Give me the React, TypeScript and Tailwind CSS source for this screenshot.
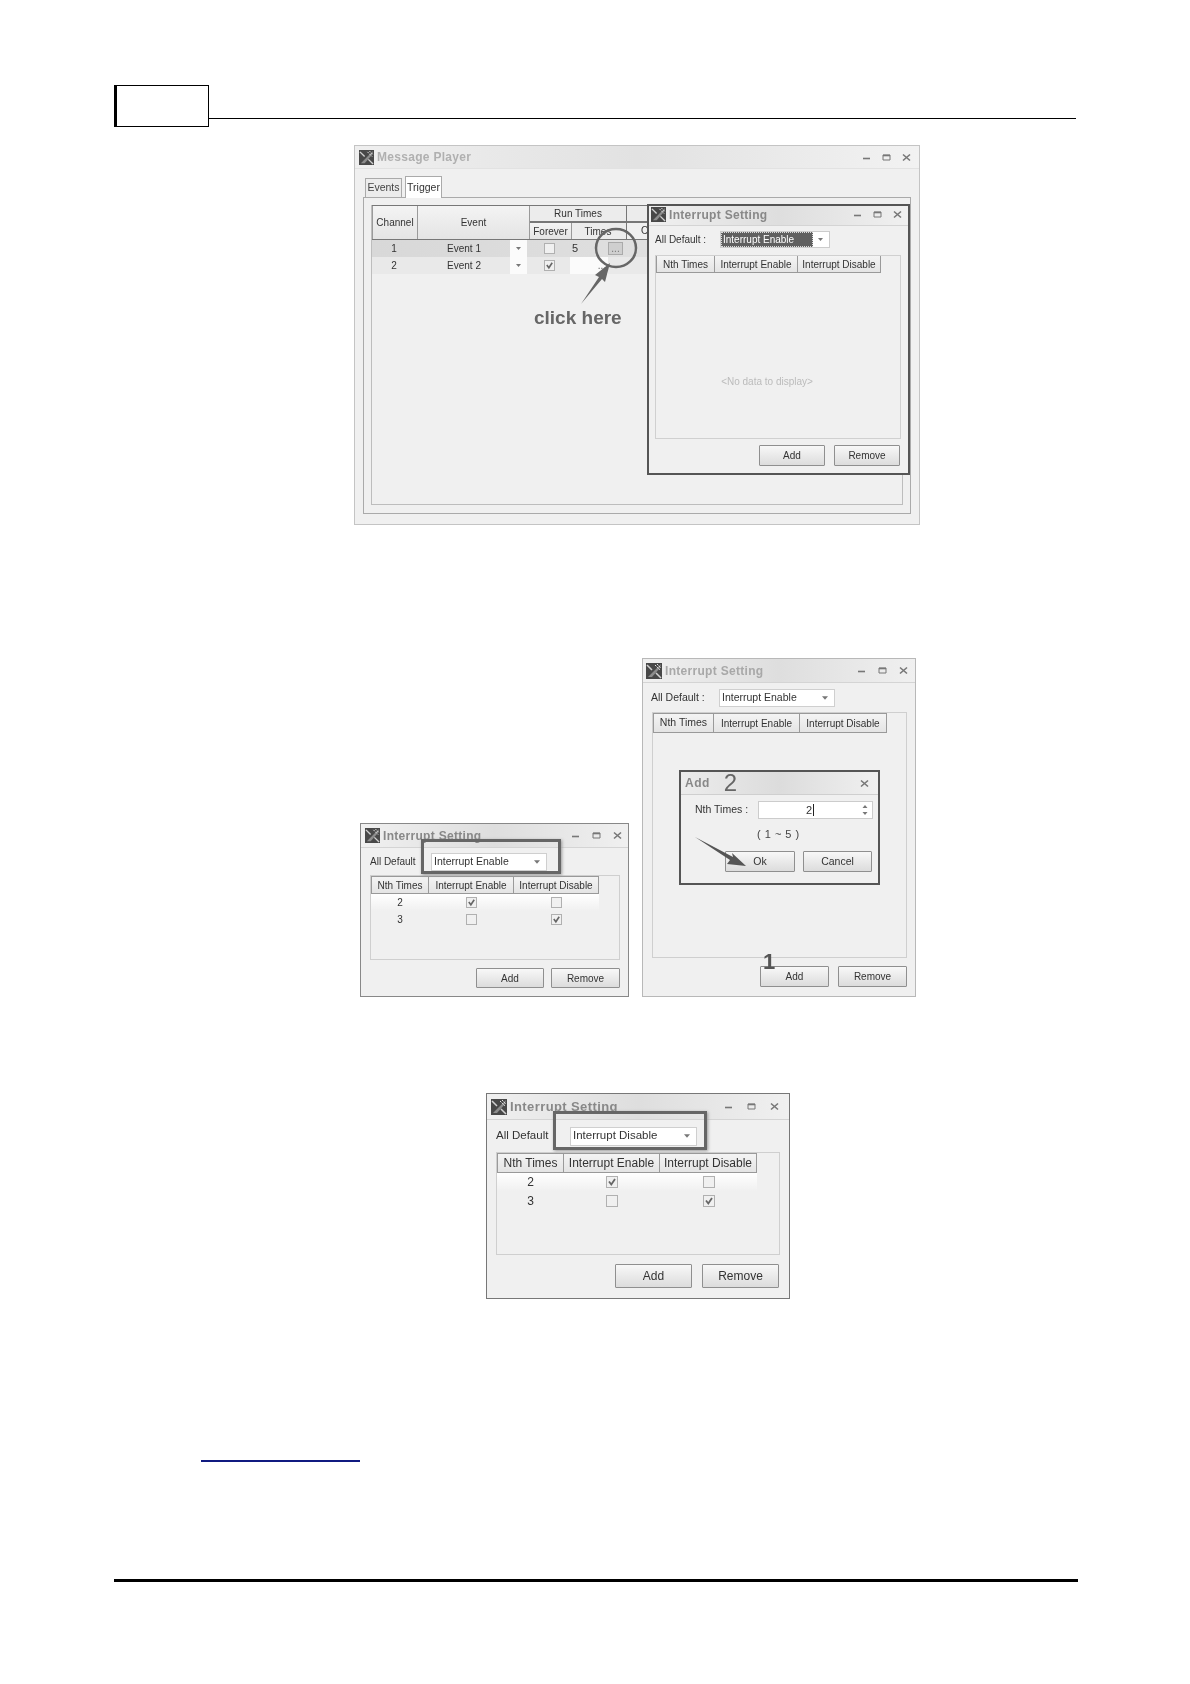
import type { ReactNode } from 'react'

function AppIcon({ className }: { className: string }) {
  return (
    <svg viewBox="0 0 16 16" className={`shrink-0 ${className}`}>
      <rect width="16" height="16" fill="#484848" />
      <path d="M2 14 L13 3 L15 1 L14 5 L6 14 Z" fill="#8c8c8c" />
      <path d="M1 2 L6 7 M10 10 L15 15" stroke="#d0d0d0" strokeWidth="1.5" />
      <path d="M9 2 L14 7 M11 1 L15 5" stroke="#e4e4e4" strokeWidth="1" strokeDasharray="2 1" />
    </svg>
  )
}

// minimize / maximize / close drawn like the scanned window chrome
function WinControls({ showMinMax = true, gap = 'gap-[12px]' }: { showMinMax?: boolean; gap?: string }) {
  return (
    <div className={`flex items-center ${gap}`}>
      {showMinMax && (
        <>
          <svg viewBox="0 0 9 9" className="w-[9px] h-[9px]">
            <path d="M1 5.5 H8" stroke="#777" strokeWidth="1.6" />
          </svg>
          <svg viewBox="0 0 9 9" className="w-[9px] h-[9px]">
            <path d="M1 2 H8 V7 H1 Z" fill="none" stroke="#777" strokeWidth="1" />
            <path d="M1 2.5 H8" stroke="#777" strokeWidth="1.6" />
          </svg>
        </>
      )}
      <svg viewBox="0 0 9 9" className="w-[9px] h-[9px]">
        <path d="M1 1.5 L8 7.5 M8 1.5 L1 7.5" stroke="#777" strokeWidth="1.6" />
      </svg>
    </div>
  )
}

function TitleBar({ title, height, titleClass, iconClass, pad = 'pl-[4px] pr-[6px]', gap }: { title: string; height: string; titleClass: string; iconClass: string; pad?: string; gap?: string }) {
  return (
    <div className={`flex items-center justify-between border-b border-[#d4d4d4] bg-gradient-to-r from-[#f0f0f0] via-[#dedede] to-[#f0f0f0] ${height} ${pad}`}>
      <div className="flex items-center gap-[3px]">
        <AppIcon className={iconClass} />
        <span className={`font-bold font-['Liberation_Sans'] ${titleClass}`}>{title}</span>
      </div>
      <WinControls gap={gap} />
    </div>
  )
}

function Check({ checked, size = 'w-[11px] h-[11px]' }: { checked: boolean; size?: string }) {
  return (
    <span className={`inline-flex items-center justify-center border border-[#b0b0b0] bg-[#f0f0f0] ${size}`}>
      {checked && (
        <svg viewBox="0 0 10 10" className="w-full h-full">
          <path d="M2 4.5 L4.3 7.5 L8 2" fill="none" stroke="#666" strokeWidth="1.8" />
        </svg>
      )}
    </span>
  )
}

function Btn({ label, className }: { label: string; className: string }) {
  return (
    <div className={`flex items-center justify-center border border-[#8f8f8f] rounded-[1px] bg-gradient-to-b from-[#f8f8f8] to-[#dcdcdc] text-[#333] ${className}`}>
      {label}
    </div>
  )
}

function SelectBox({ value, className }: { value: string; className: string }) {
  return (
    <div className={`flex items-center justify-between bg-white border border-[#cfcfcf] pl-[2px] pr-[6px] text-[#333] ${className}`}>
      <span>{value}</span>
      <svg viewBox="0 0 7 4" className="w-[6px] h-[4px]">
        <path d="M0 0 H7 L3.5 4 Z" fill="#777" />
      </svg>
    </div>
  )
}

function HeadCell({ children, className }: { children: ReactNode; className: string }) {
  return (
    <div className={`flex items-center justify-center border-r border-[#9a9a9a] bg-gradient-to-b from-[#f4f4f4] to-[#e4e4e4] text-[#333] ${className}`}>
      {children}
    </div>
  )
}

function Row({ n, first, second, rowClass, cols, checkSize }: { n: string; first: boolean; second: boolean; rowClass: string; cols: string[]; checkSize?: string }) {
  return (
    <div className={`flex items-center text-[#333] ${rowClass}`}>
      <div className={`text-center ${cols[0]}`}>{n}</div>
      <div className={`flex justify-center ${cols[1]}`}><Check checked={first} size={checkSize} /></div>
      <div className={`flex justify-center ${cols[2]}`}><Check checked={second} size={checkSize} /></div>
    </div>
  )
}

function Highlight({ className }: { className: string }) {
  return <div className={`absolute border-[3px] border-[#666] shadow-[1px_1px_3px_#999] ${className}`} />
}

function MessagePlayer() {
  return (
    <div className="relative w-[566px] h-[380px] bg-[#f0f0f0] border border-[#c4c4c4] flex flex-col font-['Liberation_Sans'] text-[10px] blur-[0.35px]">
      <div className="flex items-center justify-between h-[23px] pl-[4px] pr-[8px] border-b border-[#e2e2e2] bg-gradient-to-r from-[#efefef] via-[#e2e2e2] to-[#f2f2f2]">
        <div className="flex items-center gap-[3px]">
          <AppIcon className="w-[15px] h-[15px]" />
          <span className="font-bold text-[12px] tracking-[0.3px] text-[#b0b0b0]">Message Player</span>
        </div>
        <WinControls gap="gap-[11px]" />
      </div>

      {/* tabs */}
      <div className="flex items-end h-[28px] pl-[10px]">
        <div className="flex items-center justify-center w-[37px] h-[19px] border border-[#aaa] border-b-0 bg-[#ececec] text-[#444] text-[10.5px]">Events</div>
        <div className="flex items-center justify-center w-[37px] h-[22px] ml-[3px] -mb-px z-10 border border-[#aaa] border-b-0 bg-white text-[#333] text-[10.5px]">Trigger</div>
      </div>

      <div className="mx-[8px] h-[317px] border border-[#aaa] bg-[#f0f0f0] px-[7px] pt-[7px]">
        <div className="h-[300px] border border-[#bdbdbd] border-t-0">
          {/* header */}
          <div className="flex h-[35px] border-y border-[#777]">
            <HeadCell className="w-[46px] border-l text-[10px]">Channel</HeadCell>
            <HeadCell className="w-[112px] text-[10px]">Event</HeadCell>
            <div className="flex flex-col w-[97px] border-r border-[#777]">
              <div className="flex items-center justify-center h-[17px] border-b-2 border-[#777] text-[#333] bg-[#ececec]">Run Times</div>
              <div className="flex flex-1">
                <HeadCell className="w-[42px] text-[10px]">Forever</HeadCell>
                <div className="flex-1 flex items-center justify-center pr-[2px] text-[10px] text-[#333] bg-[#ececec]">Times</div>
              </div>
            </div>
            <div className="flex-1 flex flex-col">
              <div className="h-[17px] border-b-2 border-[#777] bg-[#ececec]" />
              <div className="flex-1 pl-[14px] text-[10px] text-[#333]">O</div>
            </div>
          </div>
          {/* rows */}
          <div className="flex items-center h-[17px] bg-gradient-to-r from-[#d8d8d8] to-[#e6e6e6] text-[#333]">
            <div className="w-[44px] text-center">1</div>
            <div className="w-[94px] text-center pl-[2px]">Event 1</div>
            <div className="flex items-center justify-center w-[17px] h-full bg-[#fbfbfb]"><svg viewBox="0 0 7 4" className="w-[5px] h-[3px]"><path d="M0 0 H7 L3.5 4 Z" fill="#777" /></svg></div>
            <div className="w-[43px] flex justify-center pl-[2px]"><Check checked={false} /></div>
            <div className="w-[38px] pl-[2px] text-[11px]">5</div>
            <div className="flex items-center justify-center w-[15px] h-[13px] border border-[#aaa] bg-[#cfcfcf] text-[#777] leading-none">...</div>
          </div>
          <div className="flex items-center h-[17px] bg-[#e9e9e9] text-[#333]">
            <div className="w-[44px] text-center">2</div>
            <div className="w-[94px] text-center pl-[2px]">Event 2</div>
            <div className="flex items-center justify-center w-[17px] h-full bg-[#fbfbfb]"><svg viewBox="0 0 7 4" className="w-[5px] h-[3px]"><path d="M0 0 H7 L3.5 4 Z" fill="#777" /></svg></div>
            <div className="w-[43px] flex justify-center pl-[2px]"><Check checked /></div>
            <div className="flex items-center justify-end w-[38px] h-full bg-[#fbfbfb] pr-[2px] text-[#666] leading-none">...</div>
          </div>
        </div>
      </div>

      {/* click annotation */}
      <svg viewBox="0 0 566 380" className="absolute left-0 top-0 w-[566px] h-[380px] pointer-events-none">
        <ellipse cx="261" cy="102" rx="20" ry="19" fill="none" stroke="#666" strokeWidth="2.5" />
        <path d="M226 158 L244 131 L240 129 L255 117 L250 136 L247 133 Z" fill="#666" />
      </svg>
      <span className="absolute left-[179px] top-[160px] font-bold text-[19px] leading-[24px] text-[#666]">click here</span>

      {/* dialog over the player */}
      <div className="absolute left-[292px] top-[58px] w-[263px] h-[271px] flex flex-col border-2 border-[#555] bg-[#f0f0f0]">
        <TitleBar title="Interrupt Setting" height="h-[20px] pb-[2px]" titleClass="text-[12px] tracking-[0.3px] text-[#888]" iconClass="w-[15px] h-[15px]" pad="pl-[2px] pr-[6px]" gap="gap-[11px]" />
        <div className="flex items-center h-[27px] pl-[6px]">
          <span className="w-[65px] text-[10px] text-[#333]">All Default :</span>
          <div className="flex items-center justify-between w-[110px] h-[17px] bg-white border border-[#ccc] pr-[6px]">
            <span className="flex items-center w-[92px] h-full bg-[#606060] text-white border border-dotted border-[#ddd] pl-[1px]">Interrupt Enable</span>
            <svg viewBox="0 0 7 4" className="w-[5px] h-[3px]"><path d="M0 0 H7 L3.5 4 Z" fill="#777" /></svg>
          </div>
        </div>
        <div className="relative ml-[6px] mr-[7px] mt-[2px] h-[184px] border border-[#d0d0d0]">
          <div className="flex w-[225px] h-[17px] border-b border-[#999]">
            <HeadCell className="w-[59px] border-l">Nth Times</HeadCell>
            <HeadCell className="w-[83px]">Interrupt Enable</HeadCell>
            <HeadCell className="w-[83px]">Interrupt Disable</HeadCell>
          </div>
          <div className="flex items-center justify-center h-[160px] pr-[22px] pt-[56px] text-[#bbb]">&lt;No data to display&gt;</div>
        </div>
        <div className="flex justify-end gap-[9px] mt-[6px] pr-[8px]">
          <Btn label="Add" className="w-[66px] h-[21px]" />
          <Btn label="Remove" className="w-[66px] h-[21px]" />
        </div>
      </div>
    </div>
  )
}

function EnableWindow() {
  const cols = ['w-[58px]', 'w-[85px]', 'w-[85px]']
  return (
    <div className="relative w-[269px] h-[174px] flex flex-col bg-[#f0f0f0] border border-[#888] font-['Liberation_Sans'] text-[10px] blur-[0.35px]">
      <TitleBar title="Interrupt Setting" height="h-[24px]" titleClass="text-[12px] tracking-[0.3px] text-[#888]" iconClass="w-[15px] h-[15px]" />
      <div className="flex items-center h-[27px] pl-[9px]">
        <span className="w-[61px] text-[10px] text-[#333]">All Default</span>
        <SelectBox value="Interrupt Enable" className="w-[116px] h-[18px] text-[10.5px]" />
      </div>
      <div className="ml-[9px] mr-[8px] h-[85px] border border-[#cfcfcf]">
        <div className="flex w-[228px] h-[18px] border-y border-[#999]">
          <HeadCell className={`${cols[0]} border-l text-[10px]`}>Nth Times</HeadCell>
          <HeadCell className={`${cols[1]} text-[10px]`}>Interrupt Enable</HeadCell>
          <HeadCell className={`${cols[2]} text-[10px]`}>Interrupt Disable</HeadCell>
        </div>
        <Row n="2" first second={false} rowClass="w-[228px] h-[17px] bg-gradient-to-b from-white to-[#f0f0f0]" cols={cols} />
        <Row n="3" first={false} second rowClass="w-[228px] h-[17px]" cols={cols} />
      </div>
      <div className="flex justify-end gap-[7px] mt-[8px] pr-[8px]">
        <Btn label="Add" className="w-[68px] h-[20px]" />
        <Btn label="Remove" className="w-[69px] h-[20px]" />
      </div>
      <Highlight className="left-[60px] top-[15px] w-[140px] h-[35px]" />
    </div>
  )
}

function AddWindow() {
  return (
    <div className="relative w-[274px] h-[339px] flex flex-col bg-[#f0f0f0] border border-[#b8b8b8] font-['Liberation_Sans'] text-[10px] blur-[0.35px]">
      <TitleBar title="Interrupt Setting" height="h-[24px]" titleClass="text-[12px] tracking-[0.3px] text-[#a8a8a8]" iconClass="w-[16px] h-[16px]" pad="pl-[3px] pr-[7px]" />
      <div className="flex items-center h-[29px] pl-[8px]">
        <span className="w-[68px] text-[10.5px] text-[#333]">All Default :</span>
        <SelectBox value="Interrupt Enable" className="w-[116px] h-[18px] text-[10.5px]" />
      </div>
      <div className="relative ml-[9px] mr-[8px] h-[246px] border border-[#cfcfcf]">
        <div className="flex w-[234px] h-[20px] border-y border-[#999]">
          <HeadCell className="w-[61px] border-l text-[10.5px]">Nth Times</HeadCell>
          <HeadCell className="w-[86px] text-[10px]">Interrupt Enable</HeadCell>
          <HeadCell className="w-[87px] text-[10px]">Interrupt Disable</HeadCell>
        </div>

        {/* modal add dialog */}
        <div className="absolute left-[26px] top-[57px] w-[201px] h-[115px] flex flex-col border-2 border-[#555] bg-[#f0f0f0]">
          <div className="relative flex items-center justify-between h-[23px] pl-[4px] pr-[9px] border-b border-[#cfcfcf] bg-gradient-to-r from-[#ececec] via-[#dcdcdc] to-[#f0f0f0]">
            <div className="flex items-center gap-[14px]">
              <span className="font-bold text-[12px] tracking-[0.5px] text-[#888]">Add</span>
              <span className="text-[24px] leading-[24px] text-[#666]">2</span>
            </div>
            <WinControls showMinMax={false} />
          </div>
          <div className="flex items-center h-[24px] mt-[3px] pl-[14px]">
            <span className="w-[63px] text-[10.5px] text-[#333]">Nth Times :</span>
            <div className="flex items-center justify-between w-[115px] h-[18px] bg-white border border-[#ccc] pl-[47px] pr-[4px] text-[#333] text-[11px]">
              <span className="border-r border-[#222] pr-[1px] leading-[12px]">2</span>
              <svg viewBox="0 0 6 12" className="w-[6px] h-[12px]">
                <path d="M0.5 4 L3 1 L5.5 4 Z M0.5 8 L3 11 L5.5 8 Z" fill="#777" />
              </svg>
            </div>
          </div>
          <div className="h-[18px] mt-[4px] pl-[76px] text-[11px] text-[#444] tracking-[0.5px]">( 1 ~ 5 )</div>
          <div className="flex justify-end gap-[8px] mt-[7px] pr-[6px]">
            <Btn label="Ok" className="w-[70px] h-[21px] text-[10.5px]" />
            <Btn label="Cancel" className="w-[69px] h-[21px] text-[10.5px]" />
          </div>
        </div>
      </div>
      <div className="flex justify-end gap-[9px] mt-[8px] pr-[8px]">
        <Btn label="Add" className="w-[69px] h-[21px]" />
        <Btn label="Remove" className="w-[69px] h-[21px]" />
      </div>

      {/* annotations */}
      <span className="absolute left-[120px] top-[291px] text-[22px] font-bold leading-[24px] text-[#555]">1</span>
      <svg viewBox="0 0 274 339" className="absolute left-0 top-0 w-[274px] h-[339px] pointer-events-none">
        <path d="M52 178 L90 198 L89 194 L103 207 L84 205 L87 201 Z" fill="#555" />
      </svg>
    </div>
  )
}

function DisableWindow() {
  const cols = ['w-[67px]', 'w-[96px]', 'w-[97px]']
  return (
    <div className="relative w-[304px] h-[206px] flex flex-col bg-[#f0f0f0] border border-[#777] font-['Liberation_Sans'] text-[12px] blur-[0.35px]">
      <TitleBar title="Interrupt Setting" height="h-[26px]" titleClass="text-[13px] tracking-[0.4px] text-[#888]" iconClass="w-[16px] h-[16px]" pad="pl-[4px] pr-[10px]" gap="gap-[14px]" />
      <div className="flex items-center h-[32px] pl-[9px]">
        <span className="w-[74px] text-[11.5px] text-[#333]">All Default</span>
        <SelectBox value="Interrupt Disable" className="w-[127px] h-[19px] text-[11.5px]" />
      </div>
      <div className="mx-[9px] h-[103px] border border-[#cfcfcf]">
        <div className="flex w-[260px] h-[20px] border-y border-[#999]">
          <HeadCell className={`${cols[0]} border-l`}>Nth Times</HeadCell>
          <HeadCell className={cols[1]}>Interrupt Enable</HeadCell>
          <HeadCell className={cols[2]}>Interrupt Disable</HeadCell>
        </div>
        <Row n="2" first second={false} rowClass="w-[260px] h-[18px] bg-gradient-to-b from-white to-[#f0f0f0]" cols={cols} checkSize="w-[12px] h-[12px]" />
        <Row n="3" first={false} second rowClass="w-[260px] h-[19px]" cols={cols} checkSize="w-[12px] h-[12px]" />
      </div>
      <div className="flex justify-end gap-[10px] mt-[9px] pr-[10px]">
        <Btn label="Add" className="w-[77px] h-[24px]" />
        <Btn label="Remove" className="w-[77px] h-[24px]" />
      </div>
      <Highlight className="left-[66px] top-[17px] w-[154px] h-[39px]" />
    </div>
  )
}

export default function App() {
  return (
    <div className="w-[1190px] h-[1684px] bg-white overflow-hidden pt-[85px]">
      {/* page header */}
      <div className="flex items-end ml-[114px]">
        <div className="w-[95px] h-[42px] border-[1.5px] border-l-[3px] border-black" />
        <div className="w-[867px] h-[1.5px] mb-[8px] bg-black" />
      </div>

      <div className="mt-[18px] ml-[354px]">
        <MessagePlayer />
      </div>

      <div className="flex items-end gap-[13px] mt-[133px] ml-[360px]">
        <EnableWindow />
        <AddWindow />
      </div>

      <div className="mt-[96px] ml-[486px]">
        <DisableWindow />
      </div>

      {/* blank link, only the underline is visible */}
      <div className="w-[159px] h-[2px] mt-[161px] ml-[201px] bg-[#101a80]" />

      {/* page footer */}
      <div className="w-[964px] h-[3px] mt-[117px] ml-[114px] bg-black" />
    </div>
  )
}
